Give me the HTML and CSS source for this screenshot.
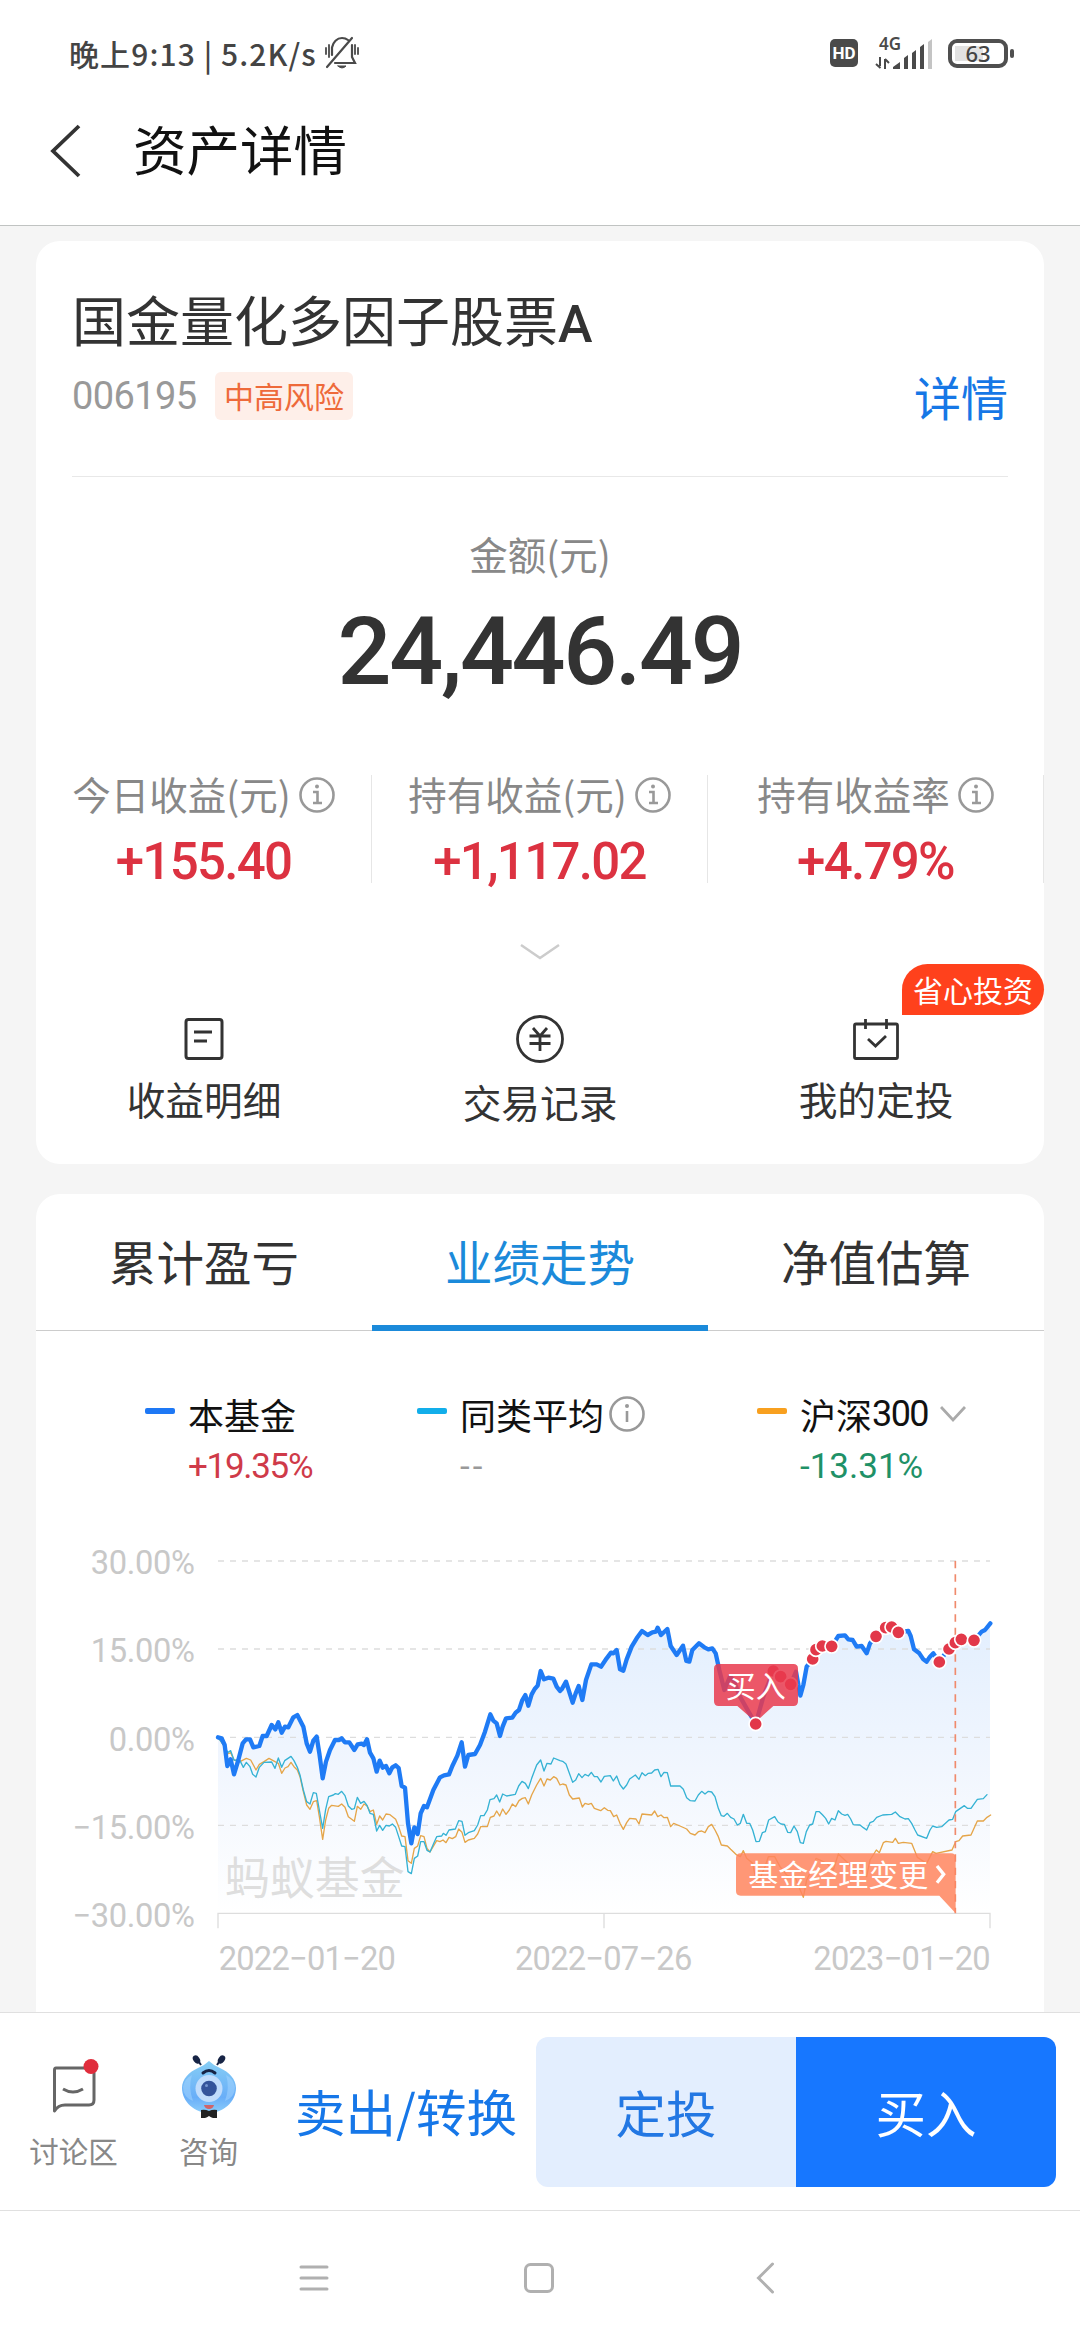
FILE: index.html
```
<!DOCTYPE html>
<html lang="zh-CN">
<head>
    <meta charset="UTF-8">
    <meta name="viewport" content="width=device-width, initial-scale=1.0">
    <title>资产详情</title>
    <link rel="stylesheet" href="styles.css">
</head>
<body>
    <div class="phone">
        <!-- 状态栏 -->
        <div class="status-bar">
            <span class="status-text">晚上9:13 | 5.2K/s</span>
            <svg class="icon-mute" width="36" height="36" viewBox="0 0 36 36" fill="none" stroke="#4a4a4a" stroke-width="2.2" stroke-linecap="round">
                <path d="M8 20V12.500C9 7 13 3 18 3q3.500 0 6 2M28 10v12l3 6H11M3 32L28 3"/>
                <path d="M2 13v6M5 10v12M34 13v6M31 10v9" stroke-width="1.800"/>
                <path d="M14 31h8q-4 4-8 0z" fill="#4a4a4a" stroke-width="1"/>
            </svg>
            <div class="status-right">
                <span class="hd">HD</span>
                <svg class="icon-signal" width="60" height="44" viewBox="0 -6 60 44">
                    <text class="net-type" x="4" y="13">4G</text>
                    <path d="M5 20v9M10 22v10M1 27l4.500 4M10 22l4 4" stroke="#4a4a4a" stroke-width="2" fill="none"/>
                    <path d="M18 32v-2l7-5v7zM29 32V21l4-3v14zM37 32V16l4-3v19zM45 32V10l4-3v25z" fill="#4a4a4a"/>
                    <path d="M53 32V5l4-3v30z" fill="#c4c4c4"/>
                </svg>
                <div class="battery"><span>63</span></div>
            </div>
        </div>

        <!-- 标题栏 -->
        <div class="header">
            <svg width="34" height="56" viewBox="0 0 34 56" fill="none" stroke="#333" stroke-width="3.800">
                <path d="M31 4L5 29l26 25"/>
            </svg>
            <h1>资产详情</h1>
        </div>

        <div class="content">
            <!-- 资产卡片 -->
            <div class="card asset-card">
                <div class="fund-head">
                    <h2>国金量化多因子股票<span>A</span></h2>
                    <div class="fund-row">
                        <span class="fund-code">006195</span>
                        <span class="risk-tag">中高风险</span>
                        <a class="detail-link">详情</a>
                    </div>
                </div>

                <div class="amount-label">金额(元)</div>
                <div class="amount">24,446.49</div>

                <div class="profit-row">
                    <div class="profit">
                        <div class="profit-label"><span>今日收益(元)</span>
                            <svg class="info" viewBox="0 0 36 36"><circle cx="18" cy="18" r="16.500"/><path d="M14 15h4.500v11M14 26h9"/><circle class="dot" cx="18" cy="9.500" r="2"/></svg>
                        </div>
                        <div class="profit-value">+155.40</div>
                    </div>
                    <div class="profit">
                        <div class="profit-label"><span>持有收益(元)</span>
                            <svg class="info" viewBox="0 0 36 36"><circle cx="18" cy="18" r="16.500"/><path d="M14 15h4.500v11M14 26h9"/><circle class="dot" cx="18" cy="9.500" r="2"/></svg>
                        </div>
                        <div class="profit-value">+1,117.02</div>
                    </div>
                    <div class="profit">
                        <div class="profit-label"><span>持有收益率</span>
                            <svg class="info" viewBox="0 0 36 36"><circle cx="18" cy="18" r="16.500"/><path d="M14 15h4.500v11M14 26h9"/><circle class="dot" cx="18" cy="9.500" r="2"/></svg>
                        </div>
                        <div class="profit-value">+4.79%</div>
                    </div>
                </div>

                <svg class="expand" width="40" height="18" viewBox="0 0 40 18" fill="none" stroke="#ccc" stroke-width="2.500">
                    <path d="M1 2l19 13L39 2"/>
                </svg>

                <div class="action-row">
                    <div class="action">
                        <svg width="50" height="50" viewBox="0 0 50 50" fill="none" stroke="#333" stroke-width="3">
                            <rect x="7" y="5.500" width="36" height="39" rx="2.500"/>
                            <path d="M15 18h18M15 27h13"/>
                        </svg>
                        <span>收益明细</span>
                    </div>
                    <div class="action action-middle">
                        <svg width="50" height="50" viewBox="0 0 50 50" fill="none" stroke="#333" stroke-width="2.800">
                            <circle cx="25" cy="25" r="22.500"/>
                            <path d="M18 14l7 8 7-8M14.500 22h21M14.500 29.500h21M25 22v15"/>
                        </svg>
                        <span>交易记录</span>
                    </div>
                    <div class="action">
                        <svg width="50" height="50" viewBox="0 0 50 50" fill="none" stroke="#333" stroke-width="2.800">
                            <rect x="3.500" y="10" width="43" height="34.500" rx="1.500"/>
                            <path d="M14.500 5v10M35.500 5v10M17 25l7.500 7L35 22"/>
                        </svg>
                        <span>我的定投</span>
                        <em class="badge">省心投资</em>
                    </div>
                </div>
            </div>

            <!-- 走势卡片 -->
            <div class="card trend-card">
                <div class="tabs">
                    <div class="tab">累计盈亏</div>
                    <div class="tab active">业绩走势</div>
                    <div class="tab">净值估算</div>
                </div>

                <div class="legend">
                    <div class="legend-item">
                        <i class="swatch blue"></i>
                        <div>
                            <div class="legend-name">本基金</div>
                            <div class="legend-value up">+19.35%</div>
                        </div>
                    </div>
                    <div class="legend-item">
                        <i class="swatch cyan"></i>
                        <div>
                            <div class="legend-name">同类平均
                                <svg class="info" viewBox="0 0 36 36"><circle cx="18" cy="18" r="16.500"/><path d="M18 15v11"/><circle class="dot" cx="18" cy="10" r="2"/></svg>
                            </div>
                            <div class="legend-value none">--</div>
                        </div>
                    </div>
                    <div class="legend-item">
                        <i class="swatch orange"></i>
                        <div>
                            <div class="legend-name">沪深<span class="num">300</span>
                                <svg class="more" width="26" height="18" viewBox="0 0 26 18" fill="none" stroke="#aaa" stroke-width="2.800"><path d="M1 2l12 13L25 2"/></svg>
                            </div>
                            <div class="legend-value down">-13.31%</div>
                        </div>
                    </div>
                </div>

                <!-- 业绩走势图 -->
                <svg class="chart" width="1008" height="482" viewBox="-72 0 3024 1446">
                    <defs>
                        <linearGradient id="area" x1="0" y1="282" x2="0" y2="1150" gradientUnits="userSpaceOnUse">
                            <stop offset="0" stop-color="#e3effe"/>
                            <stop offset="0.500" stop-color="#f1f6fe"/>
                            <stop offset="1" stop-color="#fff"/>
                        </linearGradient>
                    </defs>

                    <path fill="url(#area)" d="M474 1150V622L485 625 494 645 502 708 512 688 522 733 535 690 548 640 558 628 570 628 580 652 598 648 608 618 620 618 635 585 646 598 655 577 665 608 675 590 685 592 700 562 712 555 730 590 740 640 750 665 760 632 770 620 778 670 788 745 798 695 810 660 825 630 845 625 868 637 883 660 893 643 921 628 930 668 940 685 950 725 959 692 988 730 1007 706 1016 714 1025 768 1035 773 1044 880 1054 940 1063 892 1073 912 1082 850 1101 832 1120 780 1140 742 1167 733 1192 677 1205 637 1215 710 1225 675 1245 672 1275 605 1291 553 1310 580 1320 618 1338 565 1357 563 1377 540 1396 495 1405 527 1424 477 1442 423 1452 448 1480 446 1500 483 1518 455 1538 518 1556 468 1567 510 1578 450 1594 403 1623 410 1653 368 1670 360 1680 418 1690 422 1715 350 1746 303 1763 315 1793 293 1803 315 1822 297 1832 348 1850 375 1869 347 1879 393 1888 395 1897 360 1917 340 1945 358 1967 370 1993 480 2010 440 2087 582 2110 500 2140 422 2192 463 2208 425 2221 497 2240 410 2258 388 2287 348 2315 349 2335 318 2355 316 2390 350 2405 348 2420 370 2430 340 2448 319 2472 293 2494 290 2515 307 2545 303 2562 358 2600 395 2620 370 2637 396 2665 358 2704 327 2742 331 2790 282V1150z"/>

                    <g class="grid">
                        <path d="M474 93H2790M474 357H2790M474 622H2790M474 886H2790"/>
                        <path class="axis" d="M474 1195V1150H2790V1195M1632 1150V1195"/>
                    </g>

                    <g class="y-labels">
                        <text x="404" y="132">30.00%</text>
                        <text x="404" y="397">15.00%</text>
                        <text x="404" y="662">0.00%</text>
                        <text x="404" y="926">−15.00%</text>
                        <text x="404" y="1190">−30.00%</text>
                    </g>
                    <g class="x-labels">
                        <text x="476" y="1320">2022−01−20</text>
                        <text x="1365" y="1320">2022−07−26</text>
                        <text x="2260" y="1320">2023−01−20</text>
                    </g>

                    <text class="watermark" x="494" y="1095">蚂蚁基金</text>

                    <polyline class="line-orange" points="474,622 494,650 503,672 512,668 522,690 540,695 559,685 572,690 588,720 598,703 612,695 627,685 645,695 655,700 665,730 675,714 684,710 693,697 702,710 712,720 720,740 730,785 740,825 750,838 760,815 770,812 778,860 788,928 797,870 806,835 815,826 835,829 845,822 855,832 865,860 883,874 892,829 902,838 912,822 921,828 930,845 940,840 950,883 959,858 968,870 978,852 990,854 1007,868 1016,890 1025,918 1035,920 1044,992 1054,1000 1063,955 1073,948 1082,917 1092,920 1101,955 1110,966 1130,932 1140,935 1149,930 1158,938 1167,922 1177,926 1187,920 1196,897 1206,907 1215,937 1225,930 1243,925 1253,912 1262,890 1282,890 1291,862 1302,858 1310,843 1319,858 1328,837 1338,853 1348,840 1357,822 1367,830 1377,812 1387,805 1396,803 1405,822 1415,795 1430,765 1442,745 1452,768 1461,747 1471,750 1481,740 1490,745 1500,765 1508,762 1518,765 1528,795 1538,807 1558,804 1567,831 1575,820 1585,823 1594,820 1603,835 1622,842 1633,833 1643,841 1651,842 1661,860 1670,855 1680,880 1690,898 1700,878 1709,865 1728,867 1737,882 1746,852 1775,855 1784,843 1793,860 1803,855 1812,863 1822,862 1832,890 1841,880 1860,888 1880,897 1891,910 1905,915 1915,905 1925,903 1935,908 1945,890 1955,883 1965,900 1975,920 1984,945 2002,948 2012,958 2030,975 2041,980 2050,962 2060,985 2078,1000 2090,1060 2100,1045 2115,1010 2125,980 2144,980 2160,1010 2180,1035 2192,1040 2202,1030 2212,1060 2230,1102 2240,1050 2260,1010 2268,985 2280,990 2300,1000 2320,1020 2335,972 2360,995 2380,1020 2405,1022 2420,1040 2430,990 2449,960 2458,968 2470,938 2478,934 2498,937 2506,925 2515,940 2530,937 2555,940 2572,982 2600,1000 2618,965 2628,970 2676,960 2687,935 2697,932 2708,918 2733,915 2752,873 2770,873 2781,862 2792,855"/>
                    <polyline class="line-cyan" points="474,622 494,650 503,668 512,662 522,690 540,692 550,712 559,697 570,710 578,733 588,741 598,712 612,697 635,696 645,715 655,684 665,712 674,692 693,679 702,692 712,712 720,735 730,780 740,815 750,822 760,788 769,790 778,840 788,895 797,838 806,800 820,795 826,791 835,793 845,784 855,797 865,828 875,838 883,836 892,802 902,820 912,814 921,826 930,850 940,853 950,903 959,886 968,901 978,886 988,888 997,882 1007,892 1016,920 1025,948 1035,950 1044,1025 1054,1031 1063,985 1073,978 1082,935 1092,935 1101,961 1110,966 1120,943 1130,920 1145,918 1150,910 1158,916 1167,900 1186,897 1196,872 1206,874 1215,916 1225,908 1243,902 1253,885 1262,857 1272,857 1282,840 1290,809 1302,806 1310,795 1319,816 1328,792 1340,798 1366,793 1376,768 1386,754 1396,760 1405,776 1415,745 1430,705 1442,690 1452,723 1461,700 1473,702 1481,684 1500,692 1508,694 1518,702 1538,757 1547,750 1556,731 1566,743 1575,733 1585,738 1594,727 1603,740 1612,740 1623,756 1633,739 1651,737 1660,753 1670,738 1680,764 1690,777 1700,765 1709,747 1726,735 1737,748 1746,728 1756,737 1765,730 1775,729 1784,720 1794,718 1803,740 1812,727 1822,728 1832,768 1860,768 1870,778 1880,803 1891,812 1905,813 1915,795 1925,784 1935,792 1945,784 1955,786 1965,800 1975,835 1984,857 1992,859 2002,850 2012,862 2022,867 2032,885 2041,880 2050,853 2060,880 2069,880 2078,900 2088,935 2098,934 2107,908 2116,905 2126,870 2144,860 2154,876 2163,882 2173,883 2183,907 2192,908 2202,888 2212,905 2221,938 2230,940 2239,905 2249,885 2258,882 2268,845 2278,845 2288,855 2297,865 2306,882 2315,865 2325,870 2335,842 2345,852 2355,856 2363,853 2372,867 2380,884 2400,885 2410,893 2420,900 2430,878 2440,874 2450,862 2468,855 2495,853 2506,846 2520,860 2535,867 2545,866 2555,880 2565,900 2573,915 2600,925 2610,900 2618,888 2630,892 2645,890 2667,870 2678,868 2687,845 2713,827 2722,835 2733,835 2752,808 2770,806 2781,794"/>
                    <polyline class="line-blue" points="474,622 485,625 494,645 502,708 512,688 522,733 535,690 548,640 558,628 570,628 580,652 598,648 608,618 620,618 635,585 646,598 655,577 665,608 675,590 685,592 700,562 712,555 730,590 740,640 750,665 760,632 770,620 778,670 788,745 798,695 810,660 825,630 838,630 845,625 855,637 868,637 883,660 893,643 905,641 912,645 921,628 930,668 940,685 950,725 959,692 968,713 978,708 988,730 997,712 1007,706 1016,714 1025,768 1035,773 1044,880 1054,940 1063,892 1073,912 1082,850 1092,828 1101,832 1120,780 1140,742 1152,736 1167,733 1177,708 1192,677 1205,637 1215,710 1225,675 1245,672 1260,645 1275,605 1291,553 1300,572 1310,580 1320,618 1328,590 1338,565 1357,563 1367,548 1377,540 1387,510 1396,495 1405,527 1415,493 1424,477 1433,467 1442,423 1452,448 1465,443 1480,446 1490,470 1500,483 1505,478 1518,455 1538,518 1547,490 1556,468 1567,510 1578,450 1594,403 1610,403 1623,410 1640,385 1653,368 1660,370 1670,360 1680,418 1690,422 1700,388 1715,350 1730,325 1746,303 1763,315 1777,307 1788,305 1793,293 1803,315 1822,297 1832,348 1850,375 1869,347 1879,393 1888,395 1897,360 1917,340 1933,352 1945,358 1957,355 1967,370 1978,420 1993,480 2010,440 2020,450 2040,500 2060,535 2087,582 2110,500 2140,422 2162,440 2192,463 2208,425 2221,497 2230,465 2240,410 2258,388 2270,358 2287,348 2315,349 2335,318 2355,316 2365,328 2378,330 2390,350 2405,348 2420,370 2430,340 2448,319 2472,293 2494,290 2515,307 2545,303 2552,318 2562,358 2578,370 2590,388 2600,395 2610,380 2620,370 2637,396 2665,358 2683,340 2704,327 2742,331 2765,305 2775,300 2791,280"/>

                    <path class="event-line" d="M2686 93V1150"/>

                    <!-- 买入点 -->
                    <g class="buy-dots">
                        <circle cx="2140" cy="423" r="20"/>
                        <circle cx="2162" cy="440" r="20"/>
                        <circle cx="2192" cy="463" r="20"/>
                        <circle cx="2258" cy="387" r="20"/>
                        <circle cx="2268" cy="359" r="20"/>
                        <circle cx="2287" cy="348" r="20"/>
                        <circle cx="2315" cy="349" r="20"/>
                        <circle cx="2448" cy="319" r="20"/>
                        <circle cx="2477" cy="293" r="20"/>
                        <circle cx="2495" cy="291" r="20"/>
                        <circle cx="2515" cy="307" r="20"/>
                        <circle cx="2638" cy="396" r="20"/>
                        <circle cx="2667" cy="357" r="20"/>
                        <circle cx="2686" cy="338" r="20"/>
                        <circle cx="2704" cy="328" r="20"/>
                        <circle cx="2742" cy="331" r="20"/>
                    </g>

                    <path class="buy-tag" d="M1976 402h224q14 0 14 14v98q0 14-14 14h-60l-53 48-55-48h-56q-14 0-14-14v-98q0-14 14-14z"/>
                    <text class="tag-text" x="1997" y="501">买入</text>
                    <g class="buy-dots"><circle cx="2087" cy="582" r="20"/></g>

                    <path class="manager-tag" d="M2042 970h631q14 0 14 14v166l-49-53h-596q-14 0-14-14v-99q0-14 14-14z"/>
                    <text class="tag-text" x="2065" y="1069">基金经理变更</text>
                    <path d="M2631 1008l20 25-20 25" fill="none" stroke="#fff" stroke-width="10"/>
                </svg>
            </div>
        </div>

        <!-- 底部操作栏 -->
        <div class="bottom-bar">
            <div class="tool">
                <svg width="60" height="66" viewBox="1 -1 60 66" fill="none" stroke="#666" stroke-width="3">
                    <path d="M13 15h33q5 0 5 5v27q0 5-5 5H22q-7 0-10.500 6V17q0-2 1.500-2z" stroke-linejoin="round"/>
                    <path d="M20 36q10 6 20 0"/>
                    <circle cx="48" cy="13.500" r="7.500" fill="#e02d3c" stroke="none"/>
                </svg>
                <span>讨论区</span>
            </div>
            <div class="tool">
                <svg width="60" height="66" viewBox="0 -1 60 66">
                    <defs>
                        <linearGradient id="face" x1="0" y1="0" x2="0" y2="1">
                            <stop offset="0" stop-color="#86cef5"/>
                            <stop offset="0.700" stop-color="#69aef8"/>
                            <stop offset="1" stop-color="#8bcdfb"/>
                        </linearGradient>
                    </defs>
                    <path d="M22 12L18 6M38 12l4-6" stroke="#172445" stroke-width="2"/>
                    <ellipse cx="17.500" cy="6.500" rx="3.200" ry="4.500" transform="rotate(-35 17.500 6.500)" fill="#172445"/>
                    <ellipse cx="42.500" cy="6.500" rx="3.200" ry="4.500" transform="rotate(35 42.500 6.500)" fill="#172445"/>
                    <path d="M30 8q4 4 11 7c9 4 16 11 16 20 0 14-13 25-27 25S3 49 3 35c0-9 7-16 16-20q7-3 11-7z" fill="url(#face)"/>
                    <path d="M4 34q2-9 9-12-4 12 1 26-10-4-10-14zM56 34q-2-9-9-12 4 12-1 26 10-4 10-14z" fill="#a6d6ff" opacity=".5"/>
                    <path d="M24 20q6-5 12 0" fill="none" stroke="#172445" stroke-width="3" stroke-linecap="round"/>
                    <circle cx="30" cy="35.500" r="13.500" fill="#c0dcfc"/>
                    <circle cx="30" cy="35.500" r="7.800" fill="#34549b"/>
                    <circle cx="27.500" cy="32.500" r="1.500" fill="#7596d0"/>
                    <path d="M25 52h10q-1 4-5 4t-5-4z" fill="#d0646a"/>
                    <path d="M22 57q4-1 8 1 4-2 8-1v8q-4 1-8-2-4 3-8 2z" fill="#222"/>
                </svg>
                <span>咨询</span>
            </div>
            <div class="sell">卖出/转换</div>
            <div class="btn btn-plan">定投</div>
            <div class="btn btn-buy">买入</div>
        </div>

        <!-- 系统导航键 -->
        <div class="nav-bar">
            <svg width="32" height="32" viewBox="0 0 32 32" fill="none" stroke="#b0b0b0" stroke-width="3" stroke-linecap="round"><path d="M3 5h26M3 16h26M3 27h26"/></svg>
            <svg width="32" height="32" viewBox="0 0 32 32" fill="none" stroke="#b0b0b0" stroke-width="3"><rect x="2.500" y="2.500" width="27" height="27" rx="5"/></svg>
            <svg width="32" height="32" viewBox="0 0 32 32" fill="none" stroke="#b0b0b0" stroke-width="3" stroke-linecap="round"><path d="M24.500 2L10.500 16l14 14"/></svg>
        </div>
    </div>
</body>
</html>
```

FILE: styles.css
```
/* 基本样式 */
* {
    box-sizing: border-box;
}

body {
    margin: 0;
    background-color: #f5f5f5;
    color: #333;
    font-family: "Noto Sans CJK SC", sans-serif;
}

h1, h2 {
    margin: 0;
    font-weight: 400;
}

svg {
    display: block;
    flex: none;
}

.phone {
    width: 1080px;
    height: 2340px;
    display: flex;
    flex-direction: column;
    overflow: hidden;
}

/* 状态栏 */
.status-bar {
    height: 106px;
    padding: 0 72px 0 69px;
    display: flex;
    align-items: center;
    background-color: #fff;
    color: #444;
}

.status-text {
    font-size: 30px;
    font-weight: 500;
    letter-spacing: 1.1px;
    white-space: nowrap;
}

.icon-mute {
    margin-left: 7px;
}

.status-right {
    display: flex;
    align-items: center;
    margin-left: auto;
}

.hd {
    width: 28px;
    height: 28px;
    border-radius: 5px;
    background-color: #4a4a4a;
    color: #fff;
    font: 700 17px/29px Roboto, sans-serif;
    text-align: center;
}

.icon-signal {
    margin: 0 13px 0 17px;
}

.net-type {
    font: 600 17px "Noto Sans", sans-serif;
    fill: #4a4a4a;
}

.battery {
    position: relative;
    width: 60px;
    height: 29px;
    border: 4px solid #4f4f4f;
    border-radius: 9px;
    background: linear-gradient(#e2e2e2, #e2e2e2) 3px 3px / 28px 15px no-repeat;
    font: 500 22px/20px "Noto Sans", sans-serif;
    text-align: center;
}

.battery::after {
    content: "";
    position: absolute;
    top: 6px;
    right: -10px;
    width: 4px;
    height: 9px;
    border-radius: 2px;
    background-color: #4f4f4f;
}

/* 标题栏 */
.header {
    height: 120px;
    padding: 0 0 32px 48px;
    display: flex;
    align-items: center;
    gap: 51px;
    background-color: #fff;
    border-bottom: 1px solid #c0c3c2;
    color: #111;
}

.header h1 {
    font-size: 53.500px;
    line-height: 76px;
    padding-bottom: 4px;
}

.content {
    flex: 1;
    min-height: 0;
    padding: 15px 36px 0;
    overflow: hidden;
}

.card {
    background-color: #fff;
    border-radius: 24px;
}

/* 资产卡片 */
.asset-card {
    height: 923px;
    margin-bottom: 30px;
}

.fund-head {
    height: 236px;
    margin: 0 36px;
    padding-top: 38px;
    border-bottom: 1px solid #e8e8e8;
}

.fund-head h2 {
    font-size: 54px;
    line-height: 80px;
}

.fund-head h2 span {
    font-family: Roboto, sans-serif;
    font-weight: 500;
    font-size: 52px;
}

.fund-row {
    height: 70px;
    margin-top: -4px;
    display: flex;
    align-items: center;
}

.fund-code {
    width: 143px;
    font: 400 38px Roboto, sans-serif;
    letter-spacing: -0.6px;
    color: #999;
}

.risk-tag {
    height: 48px;
    padding: 0 9px;
    border-radius: 6px;
    background-color: #feefe9;
    color: #ee6a3a;
    font-size: 30px;
    line-height: 47px;
}

.detail-link {
    margin-left: auto;
    color: #1677e6;
    font-size: 47px;
    line-height: 70px;
}

.amount-label {
    padding-top: 48px;
    color: #888;
    font-size: 38.500px;
    line-height: 56px;
    text-align: center;
}

.amount {
    height: 120px;
    margin-top: 11px;
    font: 500 95px/120px Roboto, sans-serif;
    letter-spacing: -2.3px;
    text-align: center;
}

.profit-row {
    display: flex;
    height: 108px;
    margin-top: 63px;
}

.profit {
    width: 336px;
    border-right: 1px solid #e6e6e6;
}

.profit-label {
    height: 40px;
    display: flex;
    align-items: center;
    justify-content: center;
    gap: 8px;
    color: #888;
    font-size: 38.500px;
    line-height: 36px;
    white-space: nowrap;
}

.profit-label span {
    padding-bottom: 4px;
}

.info {
    width: 36px;
    height: 36px;
    fill: none;
    stroke: #999;
    stroke-width: 2.600;
}

.info .dot {
    fill: #999;
    stroke: none;
}

.profit-value {
    margin-top: 17px;
    color: #dc3241;
    font: 500 51px/60px Roboto, sans-serif;
    letter-spacing: -1.7px;
    text-align: center;
}

.expand {
    margin: 60px auto 0;
}

.action-row {
    display: flex;
    margin-top: 53px;
}

.action {
    position: relative;
    width: 336px;
    display: flex;
    flex-direction: column;
    align-items: center;
    font-size: 38.700px;
    line-height: 56px;
}

.action span {
    margin-top: 6px;
}

.action-middle span {
    margin-top: 9px;
}

.badge {
    position: absolute;
    top: -50px;
    right: 0;
    height: 51px;
    padding: 0 11px;
    border-radius: 26px 26px 26px 0;
    background-color: #ff411c;
    color: #fff;
    font-size: 30px;
    font-style: normal;
    line-height: 51px;
}

/* 走势卡片 */
.trend-card {
    border-radius: 24px 24px 0 0;
}

.tabs {
    display: flex;
    height: 137px;
    border-bottom: 1px solid #ccc;
}

.tab {
    width: 336px;
    height: 137px;
    font-size: 47.500px;
    line-height: 133px;
    text-align: center;
}

.tab.active {
    color: #1b8ada;
    border-bottom: 6px solid #1b8ada;
}

.legend {
    display: flex;
    height: 199px;
    padding: 56px 0 0 109px;
    color: #111;
}

.legend-item {
    display: flex;
    gap: 13px;
    width: 272px;
}

.legend-item:nth-child(2) {
    width: 340px;
}

.swatch {
    flex: none;
    width: 30px;
    height: 6px;
    margin-top: 21px;
    border-radius: 2px;
}

.swatch.blue {
    background-color: #1e78f5;
}

.swatch.cyan {
    background-color: #12aeea;
}

.swatch.orange {
    background-color: #f8a01f;
}

.legend-name {
    height: 54px;
    display: flex;
    align-items: center;
    font-size: 36px;
    line-height: 52px;
    white-space: nowrap;
}

.legend-name .info {
    margin-left: 5px;
}

.legend-name .more {
    margin-left: 12px;
}

.num {
    font-family: Roboto, sans-serif;
    letter-spacing: -1.6px;
}

.legend-value {
    font: 400 35px/52px Roboto, sans-serif;
    letter-spacing: -1.3px;
}

.up {
    color: #cf3a49;
}

.down {
    color: #1f9167;
    letter-spacing: 0;
}

.none {
    color: #999;
    letter-spacing: 3px;
}

/* 走势图 */
.grid path {
    fill: none;
    stroke: #ddd;
    stroke-width: 4;
    stroke-dasharray: 18 18;
}

.grid .axis {
    stroke-width: 4;
    stroke-dasharray: none;
}

.y-labels text,
.x-labels text {
    font: 400 98px Roboto, sans-serif;
    letter-spacing: -1px;
    fill: #c8c8c8;
}

.y-labels text {
    text-anchor: end;
}

.x-labels text {
    letter-spacing: -2.3px;
}

.watermark {
    font-size: 135px;
    font-weight: 400;
    fill: #dedede;
}

.line-blue,
.line-cyan,
.line-orange {
    fill: none;
    stroke-linejoin: round;
    stroke-linecap: round;
}

.line-blue {
    stroke: #1f7bf5;
    stroke-width: 13;
}

.line-cyan {
    stroke: #35b2d4;
    stroke-width: 4;
}

.line-orange {
    stroke: #e5a549;
    stroke-width: 4;
}

.event-line {
    stroke: #f08a6c;
    stroke-width: 5;
    stroke-dasharray: 22 18;
}

.buy-dots circle {
    fill: #e23849;
    stroke: #fff;
    stroke-width: 5;
}

.buy-tag {
    fill: #e93a4e;
    fill-opacity: 0.85;
}

.manager-tag {
    fill: #ff855e;
    fill-opacity: 0.85;
}

.tag-text {
    font-size: 90px;
    fill: #fff;
}

/* 底部操作栏 */
.bottom-bar {
    height: 198px;
    padding: 0 24px 0 6px;
    display: flex;
    align-items: center;
    background-color: #fff;
    border-top: 1px solid #e0e0e0;
}

.tool {
    width: 135px;
    display: flex;
    flex-direction: column;
    align-items: center;
    color: #888;
    font-size: 29.500px;
    line-height: 44px;
}

.tool span {
    margin-top: 10px;
}

.sell {
    width: 260px;
    padding-bottom: 3px;
    color: #1677e8;
    font-size: 50.500px;
    text-align: center;
    white-space: nowrap;
}

.btn {
    width: 260px;
    height: 150px;
    font-size: 50.500px;
    line-height: 148px;
    text-align: center;
}

.btn-plan {
    border-radius: 12px 0 0 12px;
    background-color: #e3eefe;
    color: #2277e3;
}

.btn-buy {
    border-radius: 0 12px 12px 0;
    background-color: #1777ff;
    color: #fff;
}

/* 系统导航键 */
.nav-bar {
    height: 130px;
    display: flex;
    justify-content: center;
    gap: 193px;
    padding: 51px 3px 0 0;
    background-color: #fff;
    border-top: 1px solid #e0e0e0;
}
```
